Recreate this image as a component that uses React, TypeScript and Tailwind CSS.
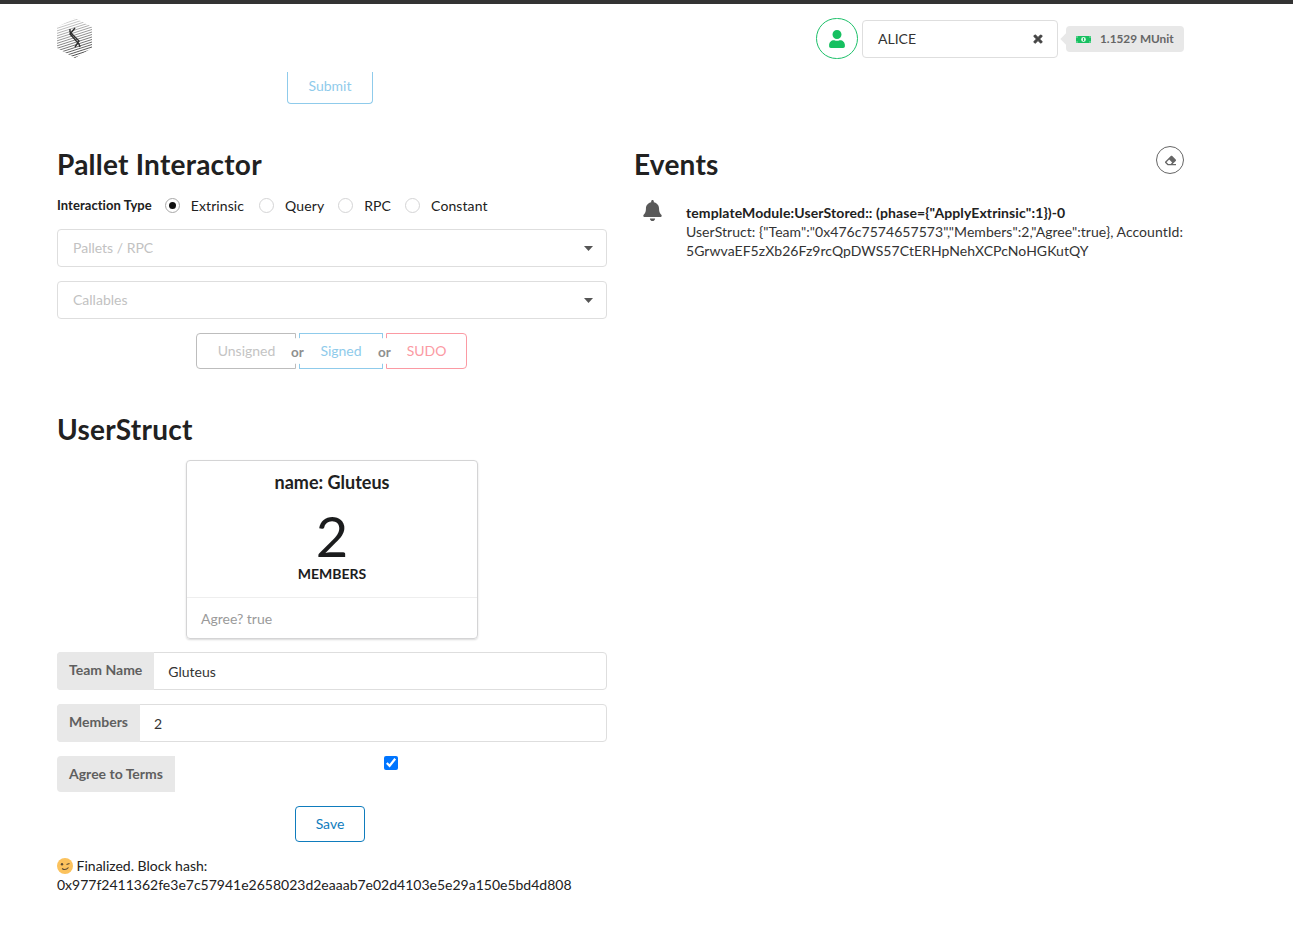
import React from "react";
import { FaBell, FaEraser, FaTimes, FaUser } from "react-icons/fa";

const Logo = () => {
  // diagonal hatch clipped to a hexagon, fades out towards the top
  const lines = Array.from({ length: 22 }, (_, i) => 6 + i * 2.5);
  return (
    <svg width="36" height="40" viewBox="0 0 36 40" className="block">
      <defs>
        <clipPath id="hex">
          <polygon points="18,0 35,9 35,30 18,40 0,30 0,9" />
        </clipPath>
      </defs>
      <g clipPath="url(#hex)">
        {lines.map((y, i) => {
          const shade = Math.max(60, 215 - i * 9);
          return <line key={y} x1="-2" y1={y} x2="38" y2={y - 13} stroke={`rgb(${shade},${shade},${shade})`} strokeWidth="1" />;
        })}
      </g>
      <path d="M13 11 L13 14 L22 23 L18 29 M18 10 L13 16 L22 26 L23 29" fill="none" stroke="#2e2e2e" strokeWidth="1.4" />
    </svg>
  );
};

const MoneyIcon = () => (
  <svg width="15" height="7" viewBox="0 0 15 7" className="mr-[9px] block">
    <rect width="15" height="7" fill="#16c060" />
    <circle cx="7.5" cy="3.5" r="2.4" fill="#d6f5e3" />
    <rect x="7" y="2" width="1" height="3" fill="#16c060" />
    <rect x="0.5" y="0.5" width="1" height="1" fill="#fff" />
    <rect x="13.5" y="0.5" width="1" height="1" fill="#fff" />
    <rect x="0.5" y="5.5" width="1" height="1" fill="#fff" />
    <rect x="13.5" y="5.5" width="1" height="1" fill="#fff" />
  </svg>
);

const CaretIcon = () => (
  <svg width="9" height="5" viewBox="0 0 9 5" className="block">
    <polygon points="0,0 9,0 4.5,5" fill="#555" />
  </svg>
);

const WinkEmoji = () => (
  <svg width="16" height="16" viewBox="0 0 16 16" className="inline-block align-[-3px]">
    <circle cx="8" cy="8" r="8" fill="#fbc25d" />
    <circle cx="5" cy="6.3" r="1.2" fill="#5b4a32" />
    <path d="M9.5 6.6 L12.5 5.6" stroke="#5b4a32" strokeWidth="1.1" fill="none" />
    <path d="M5 10.5 Q8.5 13 11.5 9.5" stroke="#5b4a32" strokeWidth="1.1" fill="none" />
  </svg>
);

const Radio = ({ label, checked }: { label: string; checked?: boolean }) => (
  <label className={`flex items-center gap-[11px] text-[14px] tracking-[0.1px] text-[#212121] ${checked ? "mr-[1px]" : ""}`}>
    <span className={`flex h-[15px] w-[15px] items-center justify-center rounded-full border ${checked ? "border-[#a8a8a8]" : "border-[#d4d4d5]"}`}>
      {checked && <span className="h-[7px] w-[7px] rounded-full bg-[#111]" />}
    </span>
    {label}
  </label>
);

const Select = ({ placeholder }: { placeholder: string }) => (
  <div className="flex h-[38px] items-center justify-between rounded-[4px] border border-[#dedede] pl-[15px] pr-[13px] text-[14px] text-[#c2c2c2]">
    <span className="pb-[2px]">{placeholder}</span>
    <CaretIcon />
  </div>
);

const Or = () => (
  <div className="relative z-10 w-[3px]">
    <span className="absolute left-1/2 top-[5px] flex h-[26px] w-[26px] -translate-x-1/2 items-center justify-center rounded-full bg-white pt-[2px] text-[13.5px] font-bold text-[#8f8f8f]">
      or
    </span>
  </div>
);

const InputRow = ({ label, value }: { label: string; value: string }) => (
  <div className="flex h-[38px] rounded-[4px] border border-[#dedede]">
    <div className="-m-px flex h-[38px] items-center rounded-l-[4px] bg-[#e8e8e8] px-[12px] pb-[3px] text-[14px] font-bold text-[#5f5f5f]">
      {label}
    </div>
    <div className="flex items-center pl-[15px] pt-[1px] text-[14px] text-[#333]">{value}</div>
  </div>
);

export default function App() {
  return (
    <div className="min-h-[927px] border-t-4 border-[#333] bg-white font-[Lato,sans-serif] text-[14px] leading-[19px] text-[#212121]">
      <div className="px-[57px] pr-[109px]">
        {/* Top bar */}
        <div className="flex h-[68px] items-start justify-between">
          <div className="pt-[14px]">
            <Logo />
          </div>
          <div className="flex items-start pt-[14px]">
            <div className="flex h-[41px] w-[42px] items-center justify-center rounded-full border border-[#1cc069] text-[#16c060]">
              <FaUser className="text-[18px]" />
            </div>
            <div className="ml-[4px] mt-[2px] flex h-[38px] w-[196px] items-center justify-between rounded-[4px] border border-[#dedede] pl-[15px] pr-[13px] text-[14px] text-[#333]">
              <span className="pb-[2px]">ALICE</span>
              <FaTimes className="stroke-[40] text-[12px] text-[#444]" />
            </div>
            <div className="relative ml-[8px] mt-[8px] flex h-[26px] w-[118px] items-center rounded-[4px] bg-[#e8e8e8] pl-[10px] text-[11.8px] font-bold text-[#666]">
              <span className="absolute -left-[4px] top-[9px] h-[8px] w-[8px] rotate-45 bg-[#e8e8e8]" />
              <MoneyIcon />
              <span className="pb-[1px]">1.1529 MUnit</span>
            </div>
          </div>
        </div>

        <div className="pl-[230px]">
          <button className="h-[32px] w-[86px] rounded-b-[4px] border border-t-0 border-[#8fcbeb] pb-[5px] text-[14px] text-[#8fcbeb]">
            Submit
          </button>
        </div>

        <div className="mt-[42px] grid grid-cols-[550px_550px] gap-x-[27px]">
          {/* Left column */}
          <div>
            <h1 className="text-[28px] font-bold leading-[36px] tracking-[0.24px] text-[#212121]">Pallet Interactor</h1>
            <div className="mt-[13px] flex h-[20px] items-center">
              <span className="mr-[13px] text-[13px] font-bold tracking-[0.05px] text-[#212121]">Interaction Type</span>
              <div className="flex items-center gap-[14px]">
                <Radio label="Extrinsic" checked />
                <Radio label="Query" />
                <Radio label="RPC" />
                <Radio label="Constant" />
              </div>
            </div>
            <div className="mt-[14px] flex flex-col gap-[14px]">
              <Select placeholder="Pallets / RPC" />
              <Select placeholder="Callables" />
            </div>
            <div className="mt-[14px] flex h-[36px] justify-center pr-[1px] text-[14px]">
              <button className="h-[36px] w-[100px] rounded-l-[4px] border border-[#bdbdbd] pb-[2px] pl-[1px] text-[#c4c4c4]">Unsigned</button>
              <Or />
              <button className="h-[36px] w-[84px] border border-[#8fcbeb] pb-[2px] text-[#8fcbeb]">Signed</button>
              <Or />
              <button className="h-[36px] w-[81px] rounded-r-[4px] border border-[#fb9aa3] pb-[2px] text-[#fb9aa3]">SUDO</button>
            </div>

            <h1 className="mt-[42px] text-[28px] font-bold leading-[36px] tracking-[0.24px] text-[#212121]">UserStruct</h1>

            {/* Card */}
            <div className="mx-auto mt-[13px] w-[292px] rounded-[4px] border border-[#d4d4d5] shadow-[0_1px_2px_rgba(0,0,0,0.15)]">
              <div className="h-[137px] border-b border-[#eeeeee] pt-[11px] text-center">
                <div className="text-[18px] font-bold leading-[21px] text-[#212121]">name: Gluteus</div>
                <div className="mt-[15px] text-[56px] font-normal leading-[56px] text-[#1b1c1d]">2</div>
                <div className="mt-[1px] text-[14px] font-bold leading-[18px] text-[#1b1c1d]">MEMBERS</div>
              </div>
              <div className="flex h-[40px] items-center px-[14px] text-[14px] text-[#9a9a9a]">Agree? true</div>
            </div>

            {/* Form */}
            <div className="mt-[13px] flex flex-col gap-[14px]">
              <InputRow label="Team Name" value="Gluteus" />
              <InputRow label="Members" value="2" />
              <div className="flex h-[36px] items-start">
                <div className="flex h-[36px] items-center rounded-l-[4px] bg-[#e8e8e8] px-[12px] pb-[1px] text-[14px] font-bold text-[#5f5f5f]">
                  Agree to Terms
                </div>
                <div className="flex flex-1 justify-center">
                  <input type="checkbox" defaultChecked className="h-[14px] w-[14px]" />
                </div>
              </div>
            </div>
            <div className="mt-[14px] flex justify-center pr-[4px]">
              <button className="h-[36px] w-[70px] rounded-[4px] border border-[#0f7cbd] pb-[2px] text-[14px] text-[#0f7cbd]">Save</button>
            </div>
            <div className="mt-[14px] text-[14px] text-[#212121]">
              <WinkEmoji /> Finalized. Block hash:
              <br />
              0x977f2411362fe3e7c57941e2658023d2eaaab7e02d4103e5e29a150e5bd4d808
            </div>
          </div>

          {/* Right column */}
          <div>
            <div className="flex items-start justify-between">
              <h1 className="text-[28px] font-bold leading-[36px] tracking-[0.24px] text-[#212121]">Events</h1>
              <div className="flex h-[28px] w-[28px] items-center justify-center rounded-full border border-[#666] text-[#666]">
                <FaEraser className="text-[11px]" />
              </div>
            </div>
            <div className="mt-[13px] flex">
              <FaBell className="ml-[8px] mt-[5px] shrink-0 text-[21px] text-[#595959]" />
              <div className="ml-[23px] mt-[8px] flex-1">
                <div className="font-bold tracking-[0.1px]">templateModule:UserStored:: (phase={'{"ApplyExtrinsic":1}'})-0</div>
                <div className="tracking-[0.05px] text-[#333]">
                  UserStruct: {'{"Team":"0x476c7574657573","Members":2,"Agree":true}'}, AccountId: 5GrwvaEF5zXb26Fz9rcQpDWS57CtERHpNehXCPcNoHGKutQY
                </div>
              </div>
            </div>
          </div>
        </div>
      </div>
    </div>
  );
}
